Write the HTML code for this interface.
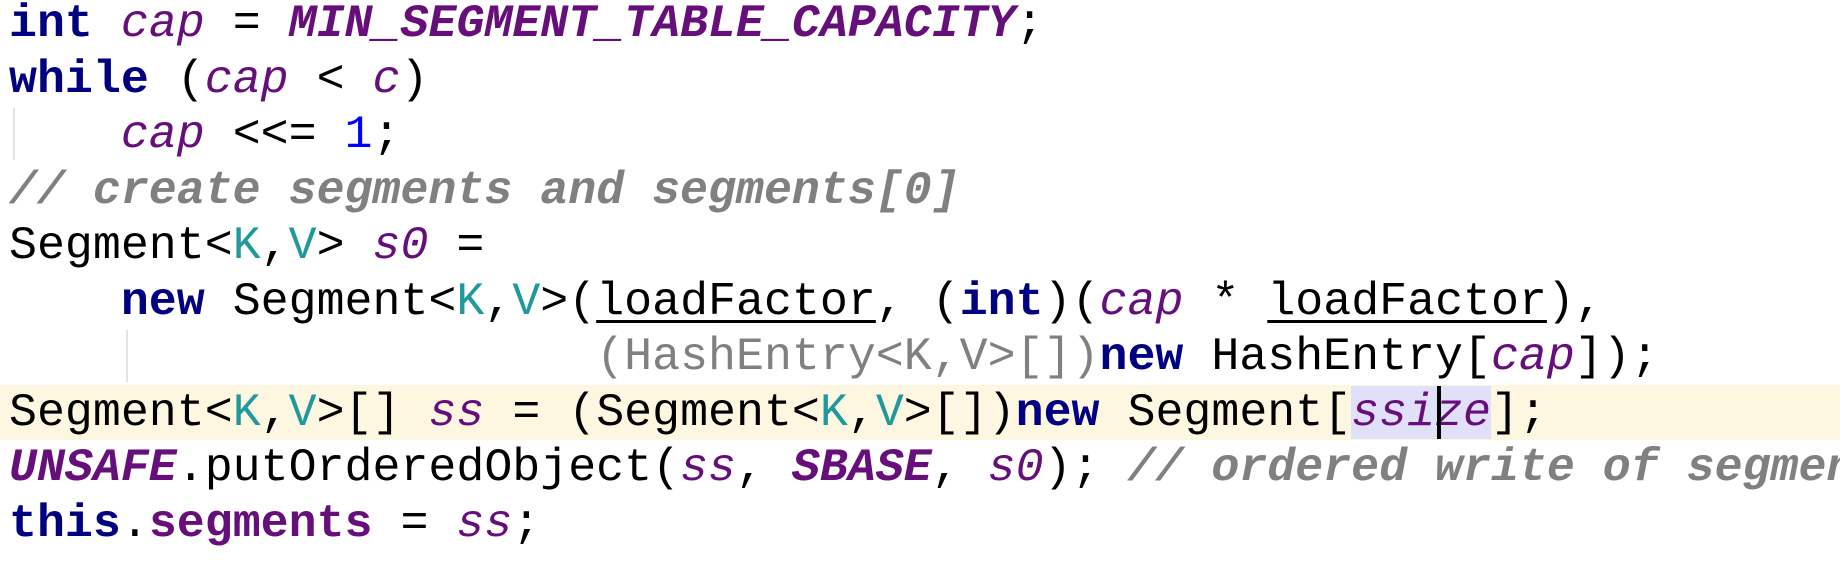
<!DOCTYPE html>
<html><head><style>
html,body{margin:0;padding:0;background:#fff;width:1840px;height:584px;overflow:hidden;position:relative}
pre{margin:0;position:absolute;left:9px;top:-4px;width:1831px;height:588px;overflow:hidden;font-family:"Liberation Mono","Courier New",monospace;font-size:46.6px;line-height:55.5px;color:#000;white-space:pre}
.k{color:#000080;font-weight:bold}
.v{color:#660e7a;font-style:italic}
.c{color:#660e7a;font-style:italic;font-weight:bold}
.f{color:#660e7a;font-weight:bold}
.m{color:#808080;font-style:italic;font-weight:bold}
.n{color:#0000ff}
.t{color:#20999d}
.g{color:#808080}
.u{text-decoration:underline;text-decoration-thickness:3px;text-underline-offset:6px}
.sel{background:#e0e0f8}
.hl{position:absolute;left:0;top:385px;width:1840px;height:55px;background:#fdf7e2}
.guide{position:absolute;width:2px;background:#e4e4e4}
.cur{position:absolute;left:1437px;top:386px;width:4px;height:53px;background:#000}
</style></head><body>
<div class="hl"></div>
<div class="guide" style="left:13px;top:108px;height:52px"></div>
<div class="guide" style="left:126px;top:330px;height:52px"></div>
<pre><span class="k">int</span> <span class="v">cap</span> = <span class="c">MIN_SEGMENT_TABLE_CAPACITY</span>;
<span class="k">while</span> (<span class="v">cap</span> &lt; <span class="v">c</span>)
    <span class="v">cap</span> &lt;&lt;= <span class="n">1</span>;
<span class="m">// create segments and segments[0]</span>
Segment&lt;<span class="t">K</span>,<span class="t">V</span>&gt; <span class="v">s0</span> =
    <span class="k">new</span> Segment&lt;<span class="t">K</span>,<span class="t">V</span>&gt;(<span class="u">loadFactor</span>, (<span class="k">int</span>)(<span class="v">cap</span> * <span class="u">loadFactor</span>),
                     <span class="g">(HashEntry&lt;K,V&gt;[])</span><span class="k">new</span> HashEntry[<span class="v">cap</span>]);
Segment&lt;<span class="t">K</span>,<span class="t">V</span>&gt;[] <span class="v">ss</span> = (Segment&lt;<span class="t">K</span>,<span class="t">V</span>&gt;[])<span class="k">new</span> Segment[<span class="v sel">ssize</span>];
<span class="c">UNSAFE</span>.putOrderedObject(<span class="v">ss</span>, <span class="c">SBASE</span>, <span class="v">s0</span>); <span class="m">// ordered write of segments[0]</span>
<span class="k">this</span>.<span class="f">segments</span> = <span class="v">ss</span>;</pre>
<div class="cur"></div>
</body></html>
